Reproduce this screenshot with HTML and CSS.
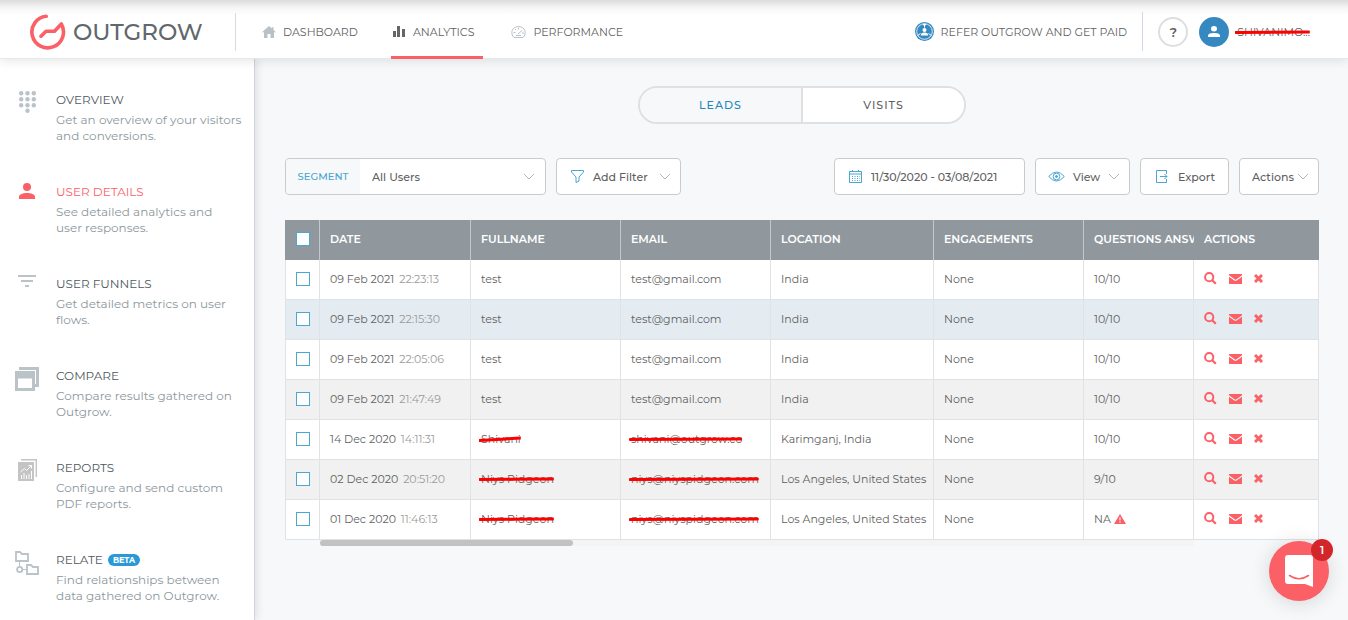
FILE: index.html
```
<!DOCTYPE html>
<html lang="en">
<head>
  <meta charset="UTF-8" />
  <meta name="viewport" content="width=device-width, initial-scale=1.0" />
  <title>Outgrow - Analytics</title>
  <link rel="stylesheet" href="styles.css">
</head>
<body>
  <!-- shared icons -->
  <svg class="sprite" aria-hidden="true">
    <symbol id="i-chevron" viewBox="0 0 12 7"><path d="M1 1l5 5 5-5" fill="none" stroke="currentColor" /></symbol>
    <symbol id="i-user" viewBox="0 0 16 16"><circle cx="8" cy="4" r="4" /><path d="M0 16v-2c0-3 4-4 8-4s8 1 8 4v2z" /></symbol>
    <symbol id="i-search" viewBox="0 0 13 13"><circle cx="5.2" cy="5.2" r="4.1" fill="none" stroke="currentColor" stroke-width="2" /><path d="M8.2 8.2l3.6 3.6" stroke="currentColor" stroke-width="2.2" /></symbol>
    <symbol id="i-mail" viewBox="0 0 13 10"><path d="M0 0h13v1.300L7.500 5.300q-1 .7-2 0L0 1.300z" /><path d="M0 2.700l5 3.600q1.500 1 3 0l5-3.600V10H0z" /></symbol>
    <symbol id="i-cross" viewBox="0 0 9 9"><path d="M1 1l7 7M8 1L1 8" stroke="currentColor" stroke-width="2.900" /></symbol>
    <symbol id="i-strike" viewBox="0 0 100 6" preserveAspectRatio="none"><path d="M1 3.500L99 3" stroke="#fe0000" stroke-width="3" vector-effect="non-scaling-stroke" stroke-linecap="round" /></symbol>
    <symbol id="i-strike-up" viewBox="0 0 100 6" preserveAspectRatio="none"><path d="M1 4.500L99 2" stroke="#fe0000" stroke-width="3" vector-effect="non-scaling-stroke" stroke-linecap="round" /></symbol>
  </svg>

  <header class="topbar">
    <a class="logo" href="#">
      <svg width="36" height="36" viewBox="0 0 36 36" fill="none" stroke="#fb6067" stroke-width="3.600" stroke-linecap="round" stroke-linejoin="round">
        <path d="M16.200 2.300A15.800 15.800 0 1 0 31.300 10L24.500 17.200H16L11 22.200" />
      </svg>
      <span>OUTGROW</span>
    </a>
    <nav class="main-nav">
      <a href="#">
        <svg width="14" height="12" viewBox="0 0 14 12" fill="#b9c1c6"><path d="M7 0l2.800 2.500V1.200h1.700V4L14 6.300h-2V12H8.500V8h-3v4H2V6.300H0z" /></svg>
        DASHBOARD
      </a>
      <a href="#" class="active">
        <svg width="12" height="11" viewBox="0 0 12 11" fill="#666"><path d="M0 5h3v6H0zM4 0h3v11H4zM9 3h3v8H9z" /></svg>
        ANALYTICS
      </a>
      <a href="#">
        <svg width="15" height="12" viewBox="0 0 15 12" fill="none" stroke="#b9c1c6"><path d="M3 11.500C-1 8 .5.500 7.500.500S16 8 12 11.500z" /><path d="M7 8l4-3.500M2.500 6.500h2M4 3l1 1M7.500 1.500v2M11 7h2M5 9.500h5" /></svg>
        PERFORMANCE
      </a>
    </nav>
    <div class="account">
      <a class="refer" href="#">
        <svg width="19" height="19" viewBox="0 0 19 19"><circle cx="9.500" cy="9.500" r="9.500" fill="#3589c0" /><circle cx="9.500" cy="9.500" r="7.800" fill="none" stroke="#fff" stroke-width=".8" /><path d="M9.500 1.500v4M2.500 13.500l3-2M16.500 13.500l-3-2" stroke="#fff" /><path d="M7.500 2h4l-2 2.500z" fill="#fff" /><circle cx="9.500" cy="8" r="2" fill="#fff" /><path d="M5.800 13.500q0-3 3.700-3t3.700 3z" fill="#fff" /></svg>
        REFER OUTGROW AND GET PAID
      </a>
      <button class="help" type="button" aria-label="Help">?</button>
      <a class="profile" href="#">
        <span class="avatar"><svg width="12" height="11" viewBox="0 0 16 16" preserveAspectRatio="none"><use href="#i-user" /></svg></span>
        <span class="struck">SHIVANIMO...<svg class="strike"><use href="#i-strike" /></svg></span>
      </a>
    </div>
  </header>

  <div class="layout">
    <aside class="sidebar">
      <a href="#" class="side-item">
        <span class="side-icon"><svg width="17" height="22" viewBox="0 0 17 22" fill="#b9c3c8"><circle cx="2.200" cy="2.200" r="2.200" /><circle cx="8.500" cy="2.200" r="2.200" /><circle cx="14.800" cy="2.200" r="2.200" /><circle cx="2.200" cy="8.200" r="2.200" /><circle cx="8.500" cy="8.200" r="2.200" /><circle cx="14.800" cy="8.200" r="2.200" /><circle cx="2.200" cy="14.200" r="2.200" /><circle cx="8.500" cy="14.200" r="2.200" /><circle cx="14.800" cy="14.200" r="2.200" /><circle cx="8.500" cy="19.800" r="2.200" /></svg></span>
        <span class="side-text"><strong>OVERVIEW</strong><span>Get an overview of your visitors and conversions.</span></span>
      </a>
      <a href="#" class="side-item active">
        <span class="side-icon"><svg width="16" height="16"><use href="#i-user" /></svg></span>
        <span class="side-text"><strong>USER DETAILS</strong><span>See detailed analytics and<br> user responses.</span></span>
      </a>
      <a href="#" class="side-item">
        <span class="side-icon"><svg width="18" height="12" viewBox="0 0 18 12" fill="#b9c3c8"><path d="M0 0h18v2H0zM3 5h12v2H3zM7 10h4v2H7z" /></svg></span>
        <span class="side-text"><strong>USER FUNNELS</strong><span>Get detailed metrics on user flows.</span></span>
      </a>
      <a href="#" class="side-item">
        <span class="side-icon"><svg width="24" height="24" viewBox="0 0 24 24" fill="none" stroke="#b9c3c8"><path d="M5.500 3V1.500h17v17H20" stroke-width="3" /><path d="M1.500 5.500h17v17h-17z" stroke-width="3" /><path d="M1 8h18" stroke-width="7" /></svg></span>
        <span class="side-text"><strong>COMPARE</strong><span>Compare results gathered on Outgrow.</span></span>
      </a>
      <a href="#" class="side-item">
        <span class="side-icon"><svg width="19" height="22" viewBox="0 0 19 22" fill="#c4c4c4"><path d="M0 3h16v19H0z" /><path d="M3 .7h15.300V18" fill="none" stroke="#c4c4c4" stroke-width="1.400" /><path d="M2.500 13l4-3.500 2 2 5-5M10.500 6.500h3v3M3.500 20v-4M6 20v-6M8.500 20v-4M11 20v-5M13.500 20v-8" fill="none" stroke="#fff" /></svg></span>
        <span class="side-text"><strong>REPORTS</strong><span>Configure and send custom PDF reports.</span></span>
      </a>
      <a href="#" class="side-item">
        <span class="side-icon"><svg width="24" height="24" viewBox="0 0 24 24" fill="none" stroke="#b9c3c8" stroke-width="1.800"><path d="M1 10V1h4l2 2h6v7zM12 23v-9h4l2 2h5v7z" /><path d="M4.500 10v5M8 18.500h4" stroke-width="1" /><circle cx="4.700" cy="18.500" r="2.600" /></svg></span>
        <span class="side-text"><strong>RELATE <em class="beta">BETA</em></strong><span>Find relationships between data gathered on Outgrow.</span></span>
      </a>
    </aside>

    <main>
      <div class="tabs">
        <button type="button" class="active">LEADS</button>
        <button type="button">VISITS</button>
      </div>

      <div class="toolbar">
        <div class="box segment">
          <label for="segment">SEGMENT</label>
          <select id="segment"><option>All Users</option></select>
          <svg class="chevron"><use href="#i-chevron" /></svg>
        </div>
        <button type="button" class="box add-filter">
          <svg width="13" height="13" viewBox="0 0 13 13" fill="none" stroke="#4ba6d1"><path d="M.500.500h12v1.500L8 7v4l-3 1.500V7L.500 2z" /></svg>
          Add Filter
          <svg class="chevron"><use href="#i-chevron" /></svg>
        </button>
        <div class="box dates">
          <label for="dates" aria-label="Date range">
            <svg width="13" height="13" viewBox="0 0 13 13" fill="none" stroke="#4ba6d1"><path d="M.500 1.500h12v11H.500zM.500 4h12M3.500 0v2M9.500 0v2" /><path d="M3 6.500h8M3 8.500h8M3 10.500h8" stroke-dasharray="1 1.500" /></svg>
          </label>
          <input id="dates" type="text" value="11/30/2020 - 03/08/2021">
        </div>
        <button type="button" class="box view">
          <svg width="17" height="11" viewBox="0 0 17 11" fill="none" stroke="#4ba6d1"><path d="M.700 5.500Q8.500-3.500 16.300 5.500 8.500 14.500.700 5.500z" /><circle cx="8.500" cy="5.500" r="3.300" /><circle cx="8.500" cy="5.500" r="1" fill="#4ba6d1" /></svg>
          View
          <svg class="chevron"><use href="#i-chevron" /></svg>
        </button>
        <button type="button" class="box export">
          <svg width="12" height="13" viewBox="0 0 12 13" fill="none" stroke="#4ba6d1"><path d="M10.500 4V.500H.500v12h10V9M4 6.500h7M8.500 4L11 6.500 8.500 9" /></svg>
          Export
        </button>
        <button type="button" class="box actions">
          Actions
          <svg class="chevron"><use href="#i-chevron" /></svg>
        </button>
      </div>

      <table class="leads">
        <colgroup>
          <col class="c-check"><col class="c-date"><col class="c-name"><col class="c-name"><col><col class="c-name"><col class="c-questions"><col class="c-actions">
        </colgroup>
        <thead>
          <tr>
            <th><input type="checkbox" aria-label="Select all"></th>
            <th>DATE</th><th>FULLNAME</th><th>EMAIL</th><th>LOCATION</th><th>ENGAGEMENTS</th><th>QUESTIONS ANSW</th><th>ACTIONS</th>
          </tr>
        </thead>
        <tbody>
          <tr>
            <td><input type="checkbox" aria-label="Select row"></td>
            <td>09 Feb 2021 <time>22:23:13</time></td><td>test</td><td>test@gmail.com</td><td>India</td><td>None</td><td>10/10</td>
            <td><div class="row-actions"><button type="button" aria-label="View"><svg width="13" height="13"><use href="#i-search" /></svg></button><button type="button" aria-label="Email"><svg width="13" height="10"><use href="#i-mail" /></svg></button><button type="button" aria-label="Delete"><svg width="9" height="9"><use href="#i-cross" /></svg></button></div></td>
          </tr>
          <tr class="hover">
            <td><input type="checkbox" aria-label="Select row"></td>
            <td>09 Feb 2021 <time>22:15:30</time></td><td>test</td><td>test@gmail.com</td><td>India</td><td>None</td><td>10/10</td>
            <td><div class="row-actions"><button type="button" aria-label="View"><svg width="13" height="13"><use href="#i-search" /></svg></button><button type="button" aria-label="Email"><svg width="13" height="10"><use href="#i-mail" /></svg></button><button type="button" aria-label="Delete"><svg width="9" height="9"><use href="#i-cross" /></svg></button></div></td>
          </tr>
          <tr>
            <td><input type="checkbox" aria-label="Select row"></td>
            <td>09 Feb 2021 <time>22:05:06</time></td><td>test</td><td>test@gmail.com</td><td>India</td><td>None</td><td>10/10</td>
            <td><div class="row-actions"><button type="button" aria-label="View"><svg width="13" height="13"><use href="#i-search" /></svg></button><button type="button" aria-label="Email"><svg width="13" height="10"><use href="#i-mail" /></svg></button><button type="button" aria-label="Delete"><svg width="9" height="9"><use href="#i-cross" /></svg></button></div></td>
          </tr>
          <tr>
            <td><input type="checkbox" aria-label="Select row"></td>
            <td>09 Feb 2021 <time>21:47:49</time></td><td>test</td><td>test@gmail.com</td><td>India</td><td>None</td><td>10/10</td>
            <td><div class="row-actions"><button type="button" aria-label="View"><svg width="13" height="13"><use href="#i-search" /></svg></button><button type="button" aria-label="Email"><svg width="13" height="10"><use href="#i-mail" /></svg></button><button type="button" aria-label="Delete"><svg width="9" height="9"><use href="#i-cross" /></svg></button></div></td>
          </tr>
          <tr>
            <td><input type="checkbox" aria-label="Select row"></td>
            <td>14 Dec 2020 <time>14:11:31</time></td>
            <td><span class="struck">Shivani<svg class="strike"><use href="#i-strike-up" /></svg></span></td>
            <td><span class="struck">shivani@outgrow.co<svg class="strike"><use href="#i-strike" /></svg></span></td>
            <td>Karimganj, India</td><td>None</td><td>10/10</td>
            <td><div class="row-actions"><button type="button" aria-label="View"><svg width="13" height="13"><use href="#i-search" /></svg></button><button type="button" aria-label="Email"><svg width="13" height="10"><use href="#i-mail" /></svg></button><button type="button" aria-label="Delete"><svg width="9" height="9"><use href="#i-cross" /></svg></button></div></td>
          </tr>
          <tr>
            <td><input type="checkbox" aria-label="Select row"></td>
            <td>02 Dec 2020 <time>20:51:20</time></td>
            <td><span class="struck">Niys Pidgeon<svg class="strike"><use href="#i-strike" /></svg></span></td>
            <td><span class="struck">niys@niyspidgeon.com<svg class="strike"><use href="#i-strike" /></svg></span></td>
            <td>Los Angeles, United States</td><td>None</td><td>9/10</td>
            <td><div class="row-actions"><button type="button" aria-label="View"><svg width="13" height="13"><use href="#i-search" /></svg></button><button type="button" aria-label="Email"><svg width="13" height="10"><use href="#i-mail" /></svg></button><button type="button" aria-label="Delete"><svg width="9" height="9"><use href="#i-cross" /></svg></button></div></td>
          </tr>
          <tr>
            <td><input type="checkbox" aria-label="Select row"></td>
            <td>01 Dec 2020 <time>11:46:13</time></td>
            <td><span class="struck">Niys Pidgeon<svg class="strike"><use href="#i-strike" /></svg></span></td>
            <td><span class="struck">niys@niyspidgeon.com<svg class="strike"><use href="#i-strike" /></svg></span></td>
            <td>Los Angeles, United States</td><td>None</td>
            <td>NA <svg class="warn" width="12" height="10" viewBox="0 0 12 10"><path d="M6 0l6 10H0z" fill="#fb6067" /><path d="M6 3.500v3M6 7.500v1.200" stroke="#fff" stroke-width="1.200" /></svg></td>
            <td><div class="row-actions"><button type="button" aria-label="View"><svg width="13" height="13"><use href="#i-search" /></svg></button><button type="button" aria-label="Email"><svg width="13" height="10"><use href="#i-mail" /></svg></button><button type="button" aria-label="Delete"><svg width="9" height="9"><use href="#i-cross" /></svg></button></div></td>
          </tr>
        </tbody>
      </table>
      <div class="scroll-track"><div class="scroll-thumb"></div></div>
    </main>
  </div>

  <button type="button" class="chat" aria-label="Open chat">
    <svg width="28" height="32" viewBox="0 0 28 32"><path d="M3 0h22a3 3 0 0 1 3 3v29l-8-3H3a3 3 0 0 1-3-3V3a3 3 0 0 1 3-3z" fill="#fff" /><path d="M4.500 20.500q9.500 6.500 19 0" fill="none" stroke="#fb6067" stroke-width="1.600" stroke-linecap="round" /></svg>
    <span class="chat-count">1</span>
  </button>
</body>
</html>
```

FILE: styles.css
```
* {
  box-sizing: border-box;
}
body {
  font-family: Montserrat, Inter, sans-serif;
  font-size: 11px;
  margin: 0;
  min-height: 100vh;
  display: flex;
  flex-direction: column;
  background: #f7f8fa;
  color: #5f5f5f;
}
a {
  color: inherit;
  text-decoration: none;
}
button, input, select {
  font: inherit;
  color: inherit;
}
button {
  cursor: pointer;
}
svg {
  flex: none;
}
.sprite {
  position: absolute;
  width: 0;
  height: 0;
}

/* top bar */
.topbar {
  display: flex;
  align-items: center;
  height: 59px;
  padding: 5px 38px 0 30px;
  background: linear-gradient(#dcdcdc, #f6f6f6 8px, #fff 15px);
  border-bottom: 1px solid #e6e8ea;
  box-shadow: 0 2px 10px rgba(0, 0, 0, 0.1);
  position: relative;
  z-index: 1;
}
.logo {
  display: flex;
  align-items: center;
  gap: 7px;
  width: 206px;
  height: 38px;
  border-right: 1px solid #d5dce0;
  font-size: 23px;
  font-weight: 500;
  color: #5f686c;
}
.main-nav {
  display: flex;
  align-self: stretch;
  gap: 22px;
  margin-left: 20px;
}
.main-nav a {
  display: flex;
  align-items: center;
  gap: 7px;
  height: 54px;
  padding: 2px 6px 0;
  border-bottom: 3px solid transparent;
}
.main-nav a.active {
  gap: 8px;
  margin-left: 5px;
  padding: 2px 9px 0 2px;
  border-color: #fb6067;
}
.account {
  display: flex;
  align-items: center;
  margin-left: auto;
}
.refer {
  display: flex;
  align-items: center;
  gap: 7px;
  height: 39px;
  padding-right: 15px;
  border-right: 1px solid #cfd9df;
}
.help {
  width: 30px;
  height: 30px;
  margin: 0 11px 0 15px;
  padding: 0;
  border: 2px solid #dedede;
  border-radius: 50%;
  background: #fff;
  font-size: 13px;
  font-weight: 600;
}
.profile {
  display: flex;
  align-items: center;
  gap: 8px;
}
.avatar {
  display: flex;
  align-items: center;
  justify-content: center;
  width: 30px;
  height: 30px;
  border-radius: 50%;
  background: #3589c0;
  fill: #fff;
}
.struck {
  position: relative;
}
.strike {
  position: absolute;
  left: -2px;
  top: 50%;
  width: calc(100% + 2px);
  height: 6px;
  margin-top: -3px;
}

/* sidebar */
.layout {
  display: flex;
  flex: 1;
}
.sidebar {
  display: flex;
  flex-direction: column;
  gap: 38px;
  width: 255px;
  flex: none;
  padding: 31px 12px 12px;
  background: #fff;
  border-right: 1px solid #ced6db;
  box-shadow: 2px 0 8px rgba(0, 0, 0, 0.1);
}
.side-item {
  display: flex;
  gap: 14px;
}
.side-icon {
  display: flex;
  justify-content: center;
  width: 30px;
  padding-top: 1px;
  flex: none;
  fill: #fb6067;
}
.side-text {
  font-size: 12px;
  line-height: 16px;
  color: #8c979d;
}
.side-text strong {
  display: flex;
  align-items: center;
  gap: 5px;
  margin-bottom: 2px;
  font-weight: 400;
  line-height: 20px;
  color: #50585c;
}
.side-item.active strong {
  color: #fb6067;
}
.beta {
  padding: 0 5px;
  border-radius: 6px;
  background: #2a9ad6;
  color: #fff;
  font-size: 8px;
  font-style: normal;
  font-weight: 700;
  line-height: 12px;
}

/* content */
main {
  flex: 1;
  min-width: 0;
  padding: 27px 29px 27px 30px;
}
.tabs {
  display: flex;
  width: 328px;
  margin: 0 auto 34px;
  border: 2px solid #dfe0e1;
  border-radius: 19px;
  overflow: hidden;
}
.tabs button {
  flex: 1;
  height: 34px;
  border: 0;
  background: #fff;
  font-weight: 500;
  letter-spacing: 1px;
}
.tabs .active {
  background: #f7f8fa;
  border-right: 2px solid #dfe0e1;
  color: #1e88bd;
}
.toolbar {
  display: flex;
  align-items: center;
  gap: 10px;
  margin-bottom: 25px;
  font-weight: 500;
}
.box {
  display: flex;
  align-items: center;
  height: 37px;
  padding: 0 12px;
  border: 1px solid #c9cbcd;
  border-radius: 4px;
  background: #fff;
  white-space: nowrap;
}
.chevron {
  width: 12px;
  height: 7px;
  margin-left: auto;
  color: #b3b7ba;
}
.segment {
  width: 261px;
  padding: 0 10px 0 0;
}
.segment label {
  display: flex;
  align-items: center;
  justify-content: center;
  align-self: stretch;
  width: 74px;
  border-radius: 4px 0 0 4px;
  background: #f7f8fa;
  color: #4ba6d1;
  font-size: 10px;
}
.segment select {
  flex: 1;
  height: 34px;
  padding: 0 12px;
  border: 0;
  background: none;
  appearance: none;
}
.add-filter {
  width: 125px;
  padding: 0 9px 0 14px;
  gap: 9px;
}
.dates {
  width: 191px;
  margin-left: auto;
  padding-left: 14px;
  gap: 9px;
}
.dates label {
  display: flex;
}
.dates input {
  width: 100%;
  min-width: 0;
  padding: 0;
  border: 0;
  background: none;
}
.view {
  width: 95px;
  gap: 8px;
}
.export {
  width: 89px;
  padding: 0 12px 0 15px;
  gap: 10px;
}
.actions {
  width: 80px;
  padding: 0 9px 0 12px;
}

/* leads table */
.leads {
  width: 100%;
  table-layout: fixed;
  border-collapse: separate;
  border-spacing: 0;
}
.c-check { width: 35px; }
.c-date { width: 151px; }
.c-name { width: 150px; }
.c-questions { width: 110px; }
.c-actions { width: 125px; }
.leads th, .leads td {
  height: 40px;
  padding: 0 0 2px 10px;
  text-align: left;
  white-space: nowrap;
  overflow: hidden;
}
.leads th {
  background: #90989e;
  border-right: 1px solid #c3c8cb;
  color: #fff;
  font-weight: 600;
}
.leads th:nth-last-child(-n+2) {
  border-right: 0;
}
.leads td {
  background: #fff;
  border-right: 1px solid #e0e3e5;
  border-bottom: 1px solid #e0e3e5;
}
.leads td:first-child {
  border-left: 1px solid #e0e3e5;
}
.leads th:first-child {
  padding-left: 11px;
}
.leads tbody tr:nth-child(even) td {
  background: #f1f1f1;
}
.leads tbody tr.hover td {
  background: #e4ebf1;
}
.leads time {
  margin-left: 2px;
  color: #9a9a9a;
}
.leads input {
  display: block;
  width: 14px;
  height: 14px;
  margin: 0;
  border: 1px solid #4ba6d1;
  background: #fff;
  appearance: none;
}
.row-actions {
  display: flex;
  align-items: center;
  gap: 12px;
}
.row-actions button {
  display: flex;
  padding: 0;
  border: 0;
  background: none;
  color: #fb6067;
  fill: #fb6067;
}
.warn {
  vertical-align: -1px;
}
.scroll-track {
  height: 6px;
  margin: 0 125px 0 35px;
  background: #f4f4f4;
}
.scroll-thumb {
  width: 29%;
  height: 6px;
  border-radius: 3px;
  background: #c2c2c2;
}

/* chat launcher */
.chat {
  display: flex;
  align-items: center;
  justify-content: center;
  position: fixed;
  right: 19px;
  bottom: 19px;
  width: 60px;
  height: 60px;
  border: 0;
  border-radius: 50%;
  background: #fb6067;
  box-shadow: 0 2px 20px rgba(0, 0, 0, 0.14);
  z-index: 2;
}
.chat-count {
  position: absolute;
  top: -2px;
  right: -4px;
  width: 22px;
  border-radius: 50%;
  background: #d3262b;
  color: #fff;
  font-weight: 600;
  line-height: 22px;
}
```
